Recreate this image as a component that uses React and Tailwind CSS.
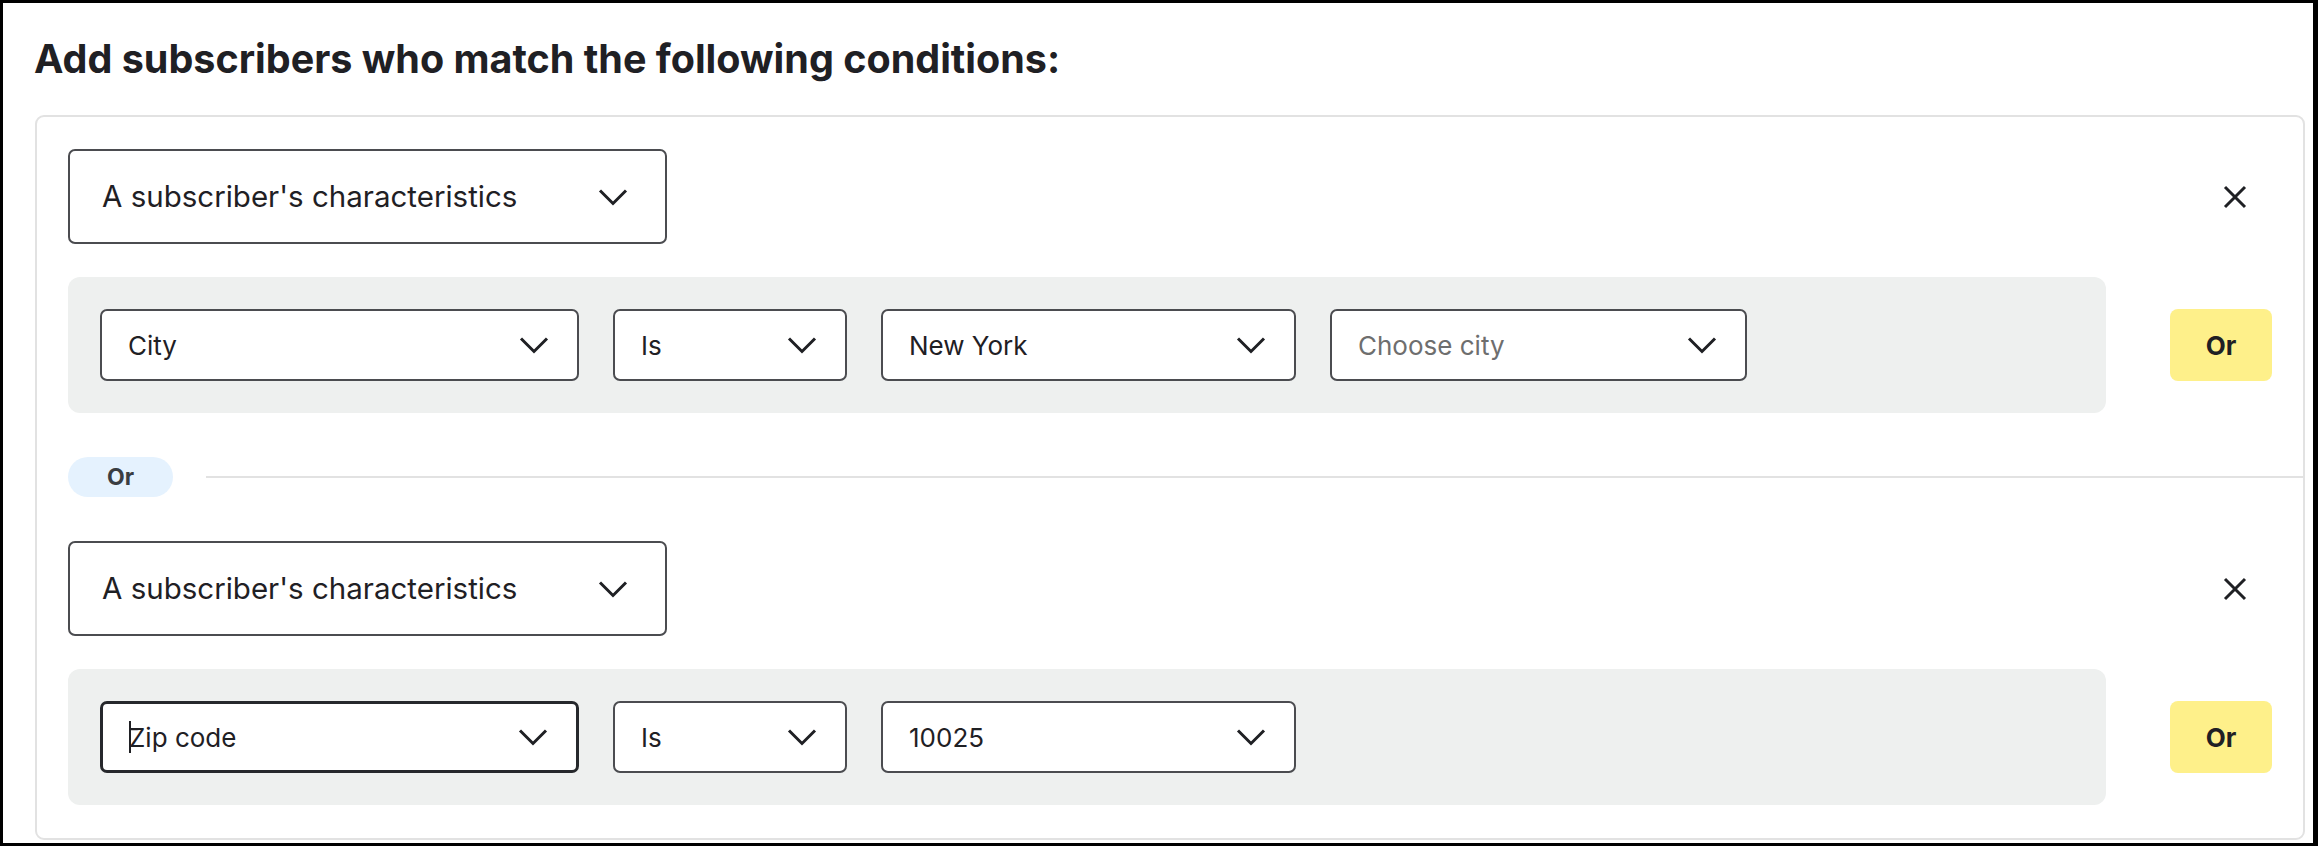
import React from "react";

const font = { fontFamily: "Inter, 'Noto Sans', sans-serif" };

function Chevron() {
  return (
    <svg width="30" height="18" viewBox="0 0 30 18" fill="none" className="shrink-0">
      <polyline points="2,2.5 15,15.5 28,2.5" stroke="#1f2024" strokeWidth="3" />
    </svg>
  );
}

function Close() {
  return (
    <svg width="24" height="24" viewBox="0 0 24 24" fill="none">
      <path d="M2 2 L22 22 M22 2 L2 22" stroke="#1f2024" strokeWidth="3" />
    </svg>
  );
}

function Select({ w, label, placeholder, focused, cursor }) {
  return (
    <div
      className={`flex items-center justify-between h-[72px] rounded-[7px] bg-white pl-[26px] pr-[28px] ${
        focused ? "border-[3px] border-[#26282c]" : "border-2 border-[#4b4c50]"
      } ${w}`}
    >
      <span className={`text-[26px] flex items-center ${placeholder ? "text-[#6e6e6e]" : "text-[#1f2024]"}`}>
        {cursor && <span className="inline-block w-[2px] h-[32px] bg-[#1f2024] -mr-[2px]" />}
        {label}
      </span>
      <Chevron />
    </div>
  );
}

function Group({ fields }) {
  return (
    <div>
      <div className="flex items-center justify-between">
        <div className="flex items-center justify-between w-[599px] h-[95px] rounded-[7px] border-2 border-[#4b4c50] pl-[32px] pr-[37px]">
          <span className="text-[29.5px] text-[#1f2024]">A subscriber's characteristics</span>
          <Chevron />
        </div>
        <button className="mr-[25px]">
          <Close />
        </button>
      </div>
      <div className="mt-[33px] flex items-center justify-between">
        <div className="w-[2038px] h-[136px] rounded-[12px] bg-[#eef0ef] flex items-center gap-[34px] pl-[32px]">
          {fields}
        </div>
        <button className="w-[102px] h-[72px] rounded-[8px] bg-[#fef08a] text-[26px] font-bold text-[#1f2024]">
          Or
        </button>
      </div>
    </div>
  );
}

export default function App() {
  return (
    <div
      style={font}
      className="w-[2318px] h-[846px] bg-white border-t-[3px] border-l-[3px] border-r-[5px] border-b-[3px] border-black overflow-hidden"
    >
      <div className="h-[112px] flex items-center pl-[31px]">
        <h1 className="text-[39.5px] font-bold text-[#1f2024] leading-[48px]">
          Add subscribers who match the following conditions:
        </h1>
      </div>
      <div className="ml-[32px] mr-[8px] rounded-[9px] border-2 border-[#e2e2e2] pt-[32px] pb-[33px] pl-[31px] pr-[31px]">
        <Group
          fields={
            <>
              <Select w="w-[479px]" label="City" />
              <Select w="w-[234px]" label="Is" />
              <Select w="w-[415px]" label="New York" />
              <Select w="w-[417px]" label="Choose city" placeholder />
            </>
          }
        />
        <div className="mt-[44px] mb-[44px] flex items-center -mr-[31px]">
          <span className="w-[105px] h-[40px] rounded-full bg-[#e5f2fe] flex items-center justify-center text-[23px] font-bold text-[#3a3d42]">
            Or
          </span>
          <div className="flex-1 ml-[33px] h-[2px] bg-[#e2e2e2]" />
        </div>
        <Group
          fields={
            <>
              <Select w="w-[479px]" label="Zip code" focused cursor />
              <Select w="w-[234px]" label="Is" />
              <Select w="w-[415px]" label="10025" />
            </>
          }
        />
      </div>
    </div>
  );
}
